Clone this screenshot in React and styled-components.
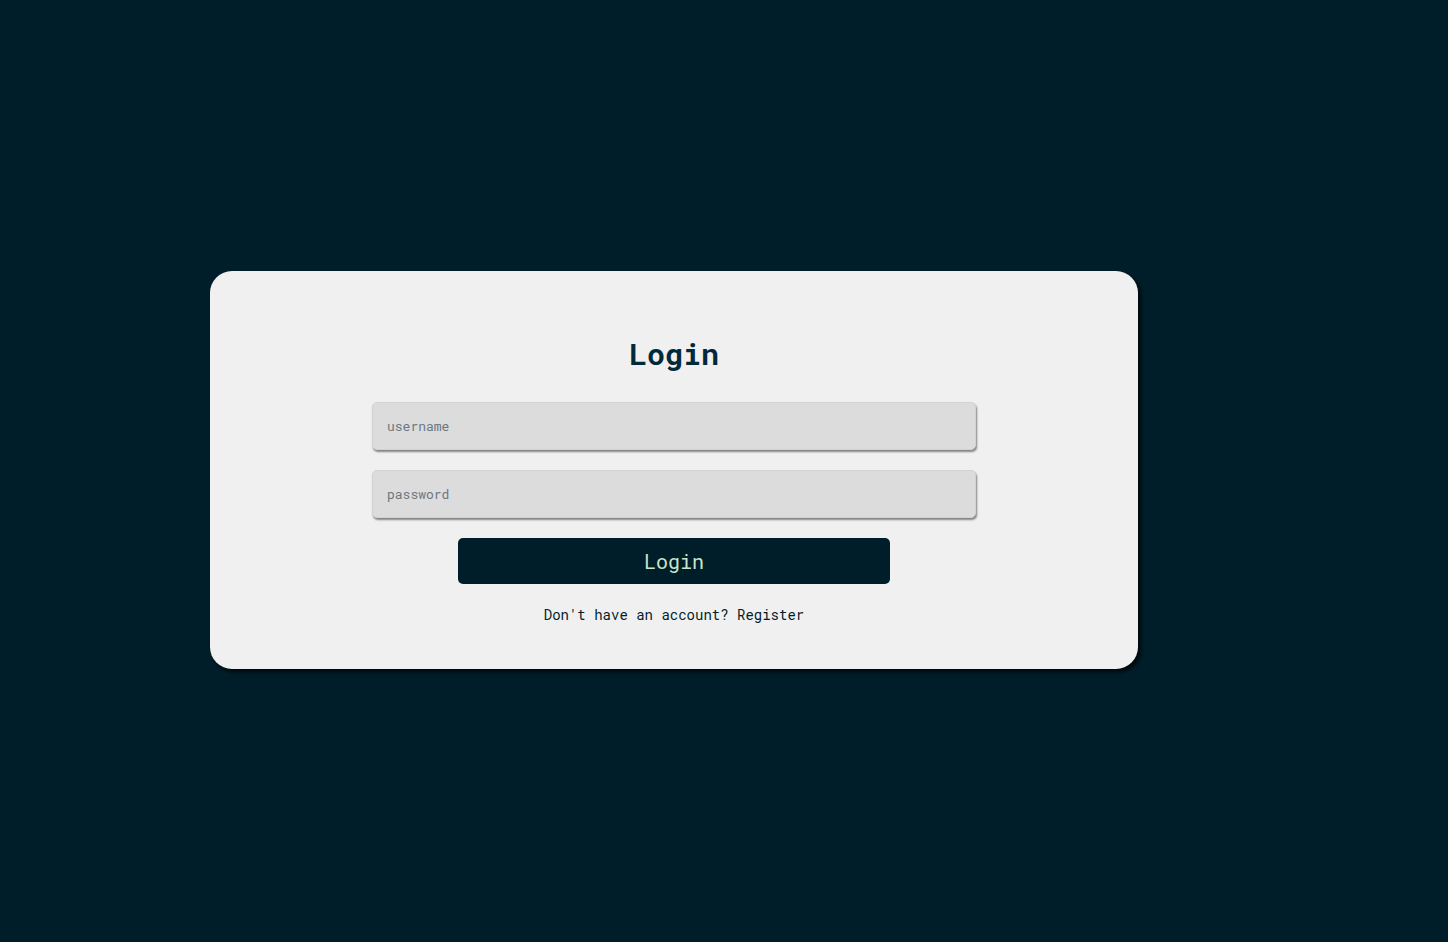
import React from "react";
import styled, { createGlobalStyle } from "styled-components";

const Global = createGlobalStyle`
  html, body { margin: 0; padding: 0; }
  body {
    background: #001e2a;
    font-family: "Roboto Mono", "DejaVu Sans Mono", monospace;
  }
  * { box-sizing: border-box; }
`;

const Page = styled.div`
  min-height: 100vh;
  display: flex;
  align-items: center;
  justify-content: flex-start;
  padding-left: 210px;
  padding-bottom: 2px;
`;

const Card = styled.form`
  width: 928px;
  height: 398px;
  background: #f0f0f0;
  border-radius: 22px;
  box-shadow: 3px 3px 4px rgba(0, 0, 0, 0.75);
  display: flex;
  flex-direction: column;
  align-items: center;
  padding-top: 63px;
`;

const Title = styled.h1`
  margin: 0 0 28px;
  font-size: 30px;
  line-height: 40px;
  font-weight: 700;
  color: #002a3b;
`;

const Input = styled.input`
  width: 604px;
  height: 48px;
  margin-bottom: ${(p) => p.$gap}px;
  background: #dcdcdc;
  border: 1px solid #d2d2d2;
  border-radius: 5px;
  box-shadow: 1px 2px 2px rgba(0, 0, 0, 0.45);
  padding: 0 14px;
  font-family: inherit;
  font-size: 13px;
  color: #333;
  outline: none;
  &::placeholder { color: #6b7780; }
`;

const Button = styled.button`
  width: 432px;
  height: 46px;
  background: #001e2a;
  border: none;
  border-radius: 5px;
  color: #c9e6cf;
  font-family: inherit;
  font-size: 20px;
  cursor: pointer;
`;

const Footer = styled.p`
  margin: 21px 0 0;
  font-size: 14px;
  line-height: 20px;
  color: #001e2a;
`;

const Link = styled.span`
  cursor: pointer;
`;

export default function App() {
  return (
    <>
      <Global />
      <Page>
        <Card onSubmit={(e) => e.preventDefault()}>
          <Title>Login</Title>
          <Input placeholder="username" $gap={20} />
          <Input type="password" placeholder="password" $gap={20} />
          <Button type="submit">Login</Button>
          <Footer>
            Don't have an account? <Link>Register</Link>
          </Footer>
        </Card>
      </Page>
    </>
  );
}
